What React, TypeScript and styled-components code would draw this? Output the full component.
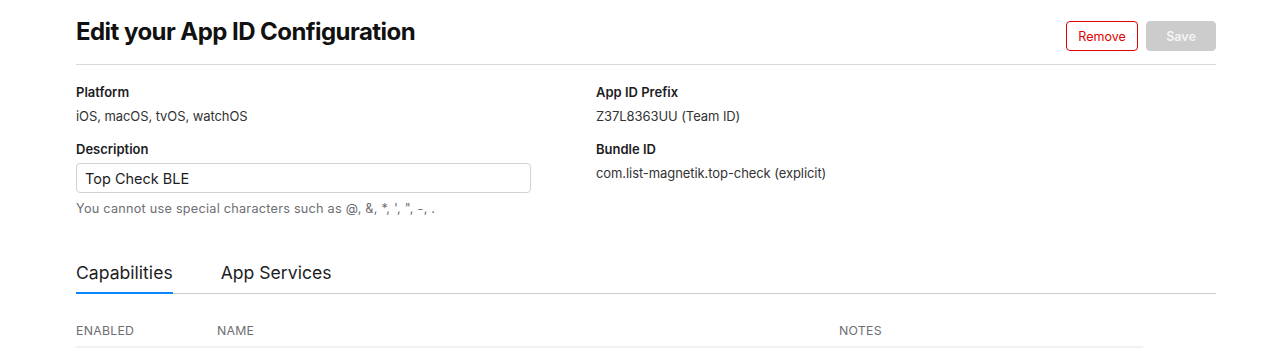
import React from "react";
import styled, { createGlobalStyle } from "styled-components";

const Global = createGlobalStyle`
  html, body { margin: 0; padding: 0; background: #fff; }
  body { font-family: Inter, "Noto Sans", sans-serif; color: #1d1d1f; -webkit-font-smoothing: antialiased; }
  * { box-sizing: border-box; }
`;

const Page = styled.div`
  padding: 0 66px 0 76px;
  width: 1282px;
`;

const Header = styled.div`
  display: flex;
  align-items: center;
  justify-content: space-between;
  height: 65px;
  border-bottom: 1px solid #d9d9d9;
`;

const Title = styled.h1`
  margin: 0 0 1px;
  font-size: 24px;
  font-weight: 700;
  letter-spacing: -0.55px;
  color: #111;
`;

const Actions = styled.div`
  display: flex;
  gap: 8px;
  align-self: flex-start;
  margin-top: 21px;
`;

const Button = styled.button<{ $variant: "danger" | "disabled" }>`
  height: 30px;
  width: 70px;
  border-radius: 4px;
  font-family: Inter, sans-serif;
  font-size: 12.5px;
  font-weight: ${(p) => (p.$variant === "danger" ? 400 : 600)};
  cursor: pointer;
  ${(p) =>
    p.$variant === "danger"
      ? `background:#fff;border:1px solid #e30000;color:#e30000;width:72px;margin-left:1px;`
      : `background:#cccccc;border:1px solid #cccccc;color:#f4f4f4;`}
`;

const Grid = styled.div`
  display: grid;
  grid-template-columns: 520px 1fr;
  padding-top: 18px;
`;

const Column = styled.div`
  display: flex;
  flex-direction: column;
`;

const Label = styled.div`
  font-size: 13px;
  font-weight: 600;
  line-height: 18px;
  color: #1d1d1f;
`;

const Value = styled.div`
  font-size: 13px;
  line-height: 18px;
  letter-spacing: -0.08px;
  margin-top: 6px;
  margin-bottom: 15px;
  color: #333;
`;

const Input = styled.input`
  width: 455px;
  height: 30px;
  margin-top: 5px;
  border: 1px solid #d2d2d2;
  border-radius: 4px;
  padding: 0 8px;
  font-family: Inter, sans-serif;
  font-size: 14.5px;
  color: #1d1d1f;
  outline: none;
`;

const Hint = styled.div`
  font-size: 12.7px;
  letter-spacing: 0.24px;
  color: #6e6e73;
  margin-top: 8px;
  line-height: 16px;
`;

const Tabs = styled.div`
  display: flex;
  gap: 48px;
  margin-top: 45px;
  border-bottom: 1px solid #cccccc;
`;

const Tab = styled.div<{ $active?: boolean }>`
  font-size: 17.6px;
  line-height: 22px;
  padding-bottom: 8px;
  color: #1d1d1f;
  margin-bottom: -1px;
  border-bottom: 2px solid ${(p) => (p.$active ? "#0a84ff" : "transparent")};
`;

const TableHead = styled.div`
  display: grid;
  grid-template-columns: 141px 622px 1fr;
  width: 1067px;
  margin-top: 29px;
  padding-bottom: 7px;
  border-bottom: 2px solid #f2f2f2;
`;

const Th = styled.div`
  font-size: 12.3px;
  letter-spacing: 0.25px;
  line-height: 16px;
  color: #6e6e73;
  text-transform: uppercase;
`;

export default function App() {
  return (
    <>
      <Global />
      <Page>
        <Header>
          <Title>Edit your App ID Configuration</Title>
          <Actions>
            <Button $variant="danger">Remove</Button>
            <Button $variant="disabled">Save</Button>
          </Actions>
        </Header>
        <Grid>
          <Column>
            <Label>Platform</Label>
            <Value>iOS, macOS, tvOS, watchOS</Value>
            <Label>Description</Label>
            <Input defaultValue="Top Check BLE" />
            <Hint>You cannot use special characters such as @, &amp;, *, ', ", -, .</Hint>
          </Column>
          <Column>
            <Label>App ID Prefix</Label>
            <Value>Z37L8363UU (Team ID)</Value>
            <Label>Bundle ID</Label>
            <Value>com.list-magnetik.top-check (explicit)</Value>
          </Column>
        </Grid>
        <Tabs>
          <Tab $active>Capabilities</Tab>
          <Tab>App Services</Tab>
        </Tabs>
        <TableHead>
          <Th>Enabled</Th>
          <Th>Name</Th>
          <Th>Notes</Th>
        </TableHead>
      </Page>
    </>
  );
}
